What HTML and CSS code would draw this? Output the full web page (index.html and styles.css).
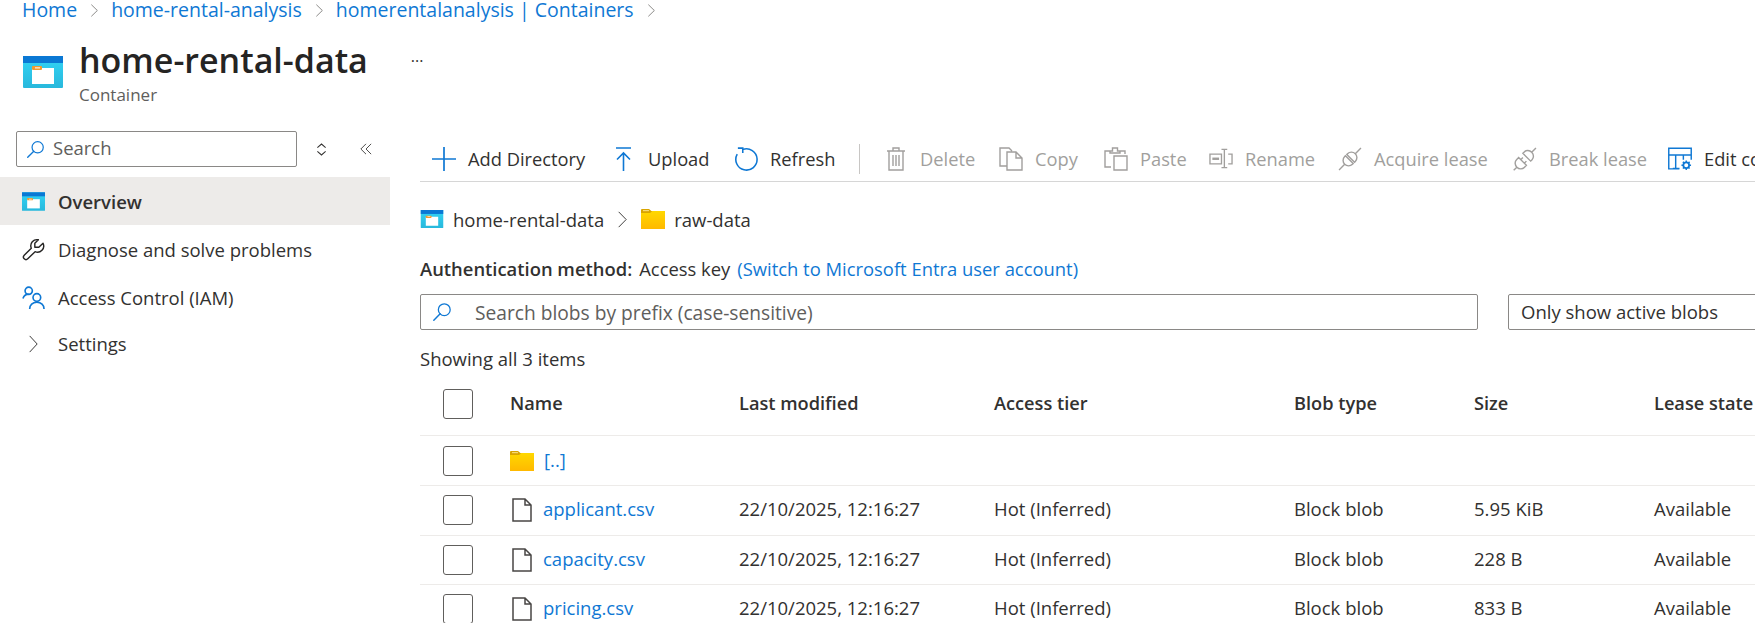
FILE: index.html
```html
<!DOCTYPE html>
<html lang="en">
<head>
<meta charset="utf-8">
<title>home-rental-data</title>
<link rel="stylesheet" href="styles.css">
</head>
<body>
<svg class="sprite" aria-hidden="true">
  <defs>
    <linearGradient id="cb" x1="0" y1="0" x2="0" y2="1"><stop offset="0" stop-color="#32d4f5"/><stop offset="1" stop-color="#28b8dc"/></linearGradient>
    <linearGradient id="fg" x1="0" y1="0" x2="0" y2="1"><stop offset="0" stop-color="#ffd800"/><stop offset="1" stop-color="#ffb900"/></linearGradient>
    <symbol id="container" viewBox="0 0 40 32">
      <rect width="40" height="32" rx="1" fill="url(#cb)"/>
      <rect width="40" height="7" fill="#0a78d4"/>
      <rect x="9" y="12" width="22" height="16" fill="#fff"/>
      <rect x="9" y="10" width="10" height="4" rx="1" fill="#f29a2e"/>
      <rect x="12" y="11.400" width="5" height="1" fill="#fff"/>
    </symbol>
    <symbol id="folder" viewBox="0 0 24 20">
      <path d="M0 2h24v18H0z" fill="url(#fg)"/>
      <path d="M0 1a1 1 0 0 1 1-1h7l3 2.500L9 4H0z" fill="#d9a400"/>
      <rect x="2" y="1" width="6" height="1.200" fill="#f5d774"/>
    </symbol>
    <symbol id="search" viewBox="0 0 22 22">
      <circle cx="13.500" cy="8.500" r="6.500" fill="none" stroke="currentColor" stroke-width="1.400"/>
      <path d="M9 13 2 20" fill="none" stroke="currentColor" stroke-width="1.600" stroke-linecap="round"/>
    </symbol>
    <symbol id="chev" viewBox="0 0 12 20" preserveAspectRatio="none"><path d="M2 1l9 9-9 9" fill="none" stroke="currentColor" stroke-width="1.100"/></symbol>
    <symbol id="file" viewBox="0 0 20 24"><path d="M1 1h12l6 6v16H1zM13 1v6h6" fill="none" stroke="currentColor" stroke-width="1.500"/></symbol>
    <symbol id="plus" viewBox="0 0 24 24"><path d="M12 0v24M0 12h24" stroke="currentColor" stroke-width="1.700"/></symbol>
    <symbol id="upload" viewBox="0 0 24 24"><path d="M4 1h15M11.500 24V6M5 12.500l6.500-6.500 6.500 6.500" fill="none" stroke="currentColor" stroke-width="1.600"/></symbol>
    <symbol id="refresh" viewBox="0 0 25 26"><path d="M3 7.800A11.500 11.500 0 1 0 9 2.700M3.700 1.200H9V6.500" fill="none" stroke="currentColor" stroke-width="1.700"/></symbol>
    <symbol id="trash" viewBox="0 0 20 24"><path d="M1 4h18M7 4V1h6v3M3 4v19h14V4M7 8v11M10 8v11M13 8v11" fill="none" stroke="currentColor" stroke-width="1.400"/></symbol>
    <symbol id="copy" viewBox="0 0 24 24"><path d="M8 19H1V1h9l3 3M8 5h9l6 6v12H8zM17 5v6h6" fill="none" stroke="currentColor" stroke-width="1.400"/></symbol>
    <symbol id="paste" viewBox="0 0 24 24"><path d="M7 20H1V4h5M16 4h5v3M6 6V4h2.500V1h5v3H16v2zM10 9h13v14H10z" fill="none" stroke="currentColor" stroke-width="1.400"/></symbol>
    <symbol id="rename" viewBox="0 0 25 24">
      <path d="M1 7h12v10H1zM16 2v19M13 2h6M13 21h6M20 7h4v10h-4" fill="none" stroke="currentColor" stroke-width="1.400"/>
      <rect x="3.500" y="10.500" width="7" height="2.500" fill="currentColor"/>
    </symbol>
    <symbol id="plug" viewBox="0 0 24 24">
      <g transform="rotate(-45 12 12)" fill="none" stroke="currentColor" stroke-width="1.400">
        <path d="M-3.500 12h8M19.500 12h8M11 6.500H10a5.500 5.500 0 0 0 0 11h1zM13 6.500h1a5.500 5.500 0 0 1 0 11h-1z"/>
      </g>
    </symbol>
    <symbol id="plugb" viewBox="0 0 24 24">
      <g transform="rotate(-45 12 12)" fill="none" stroke="currentColor" stroke-width="1.400">
        <path d="M-4 12h4.500M8.500 6.500H5.500a5 5.500 0 0 0 0 11h3zM8.500 9.500h3M8.500 14.500h3M14.500 6.500h2a5 5.500 0 0 1 0 11h-2zM21.500 12h6"/>
      </g>
    </symbol>
    <symbol id="columns" viewBox="0 0 25 24">
      <path d="M.8.8h23.400v7H.8zM.8 7.800v14.500h11M8 7.800v14M5 21.800h7M16 7.800v5M24.200 7.800v5" fill="none" stroke="currentColor" stroke-width="1.500"/>
      <circle cx="19" cy="18.500" r="3" fill="none" stroke="currentColor" stroke-width="1.800"/>
      <path d="M19 13.500v2M19 21.500v2M14 18.500h2M22 18.500h2M15.500 15l1.500 1.500M21 20.500l1.500 1.500M22.500 15 21 16.500M17 20.500 15.500 22" stroke="currentColor" stroke-width="1.500"/>
    </symbol>
    <symbol id="wrench" viewBox="0 0 26 26"><path d="M10.500 11.500A7 7 0 0 1 18.500 2L14.500 6V10.500H19L23.800 6A7 7 0 0 1 14.800 15.500L6.500 23.500A2.800 2.800 0 0 1 2.500 19.500Z" fill="none" stroke="currentColor" stroke-width="1.600" stroke-linejoin="round"/></symbol>
    <symbol id="iam" viewBox="0 0 24 24"><circle cx="7" cy="5" r="3.800" fill="none" stroke="currentColor" stroke-width="1.700"/><circle cx="15.500" cy="12" r="4" fill="none" stroke="currentColor" stroke-width="1.700"/><path d="M1 13c1-3 3-4.500 6-4.500M8 24c0-4 3-7 7.500-7s7.500 3 7.500 7" fill="none" stroke="currentColor" stroke-width="1.700"/></symbol>
    <symbol id="updown" viewBox="0 0 12 14"><path d="M1.500 5 6 1l4.500 4M1.500 9 6 13l4.500-4" fill="none" stroke="currentColor" stroke-width="1.100"/></symbol>
    <symbol id="dblleft" viewBox="0 0 14 14"><path d="M7 1 1 7l6 6M13 1 7 7l6 6" fill="none" stroke="currentColor" stroke-width="1"/></symbol>
  </defs>
</svg>

<nav class="crumbs">
  <a href="#">Home</a><svg class="ic-chev"><use href="#chev"/></svg>
  <a href="#">home-rental-analysis</a><svg class="ic-chev"><use href="#chev"/></svg>
  <a href="#">homerentalanalysis | Containers</a><svg class="ic-chev"><use href="#chev"/></svg>
</nav>

<header class="head">
  <svg class="ic-head"><use href="#container"/></svg>
  <div class="head-text">
    <h1>home-rental-data</h1>
    <div class="sub">Container</div>
  </div>
  <span class="more">···</span>
</header>

<div class="layout">
  <aside class="side">
    <div class="side-top">
      <div class="side-search"><svg class="ic-search"><use href="#search"/></svg><span>Search</span></div>
      <svg class="ic-updown"><use href="#updown"/></svg>
      <svg class="ic-dbl"><use href="#dblleft"/></svg>
    </div>
    <ul class="menu">
      <li class="menu-item active"><svg class="ic-menu"><use href="#container"/></svg><span>Overview</span></li>
      <li class="menu-item"><svg class="ic-menu dark"><use href="#wrench"/></svg><span>Diagnose and solve problems</span></li>
      <li class="menu-item"><svg class="ic-menu blue"><use href="#iam"/></svg><span>Access Control (IAM)</span></li>
      <li class="menu-item"><svg class="ic-menu-chev"><use href="#chev"/></svg><span>Settings</span></li>
    </ul>
  </aside>

  <main class="main">
    <div class="toolbar">
      <button class="tool w-add"><svg class="ti blue"><use href="#plus"/></svg>Add Directory</button>
      <button class="tool w-up"><svg class="ti blue"><use href="#upload"/></svg>Upload</button>
      <button class="tool w-ref"><svg class="ti blue"><use href="#refresh"/></svg>Refresh</button>
      <span class="sep"></span>
      <button class="tool off w-del"><svg class="ti"><use href="#trash"/></svg>Delete</button>
      <button class="tool off w-copy"><svg class="ti"><use href="#copy"/></svg>Copy</button>
      <button class="tool off w-paste"><svg class="ti"><use href="#paste"/></svg>Paste</button>
      <button class="tool off w-ren"><svg class="ti"><use href="#rename"/></svg>Rename</button>
      <button class="tool off w-acq"><svg class="ti"><use href="#plug"/></svg>Acquire lease</button>
      <button class="tool off w-brk"><svg class="ti"><use href="#plugb"/></svg>Break lease</button>
      <button class="tool"><svg class="ti blue"><use href="#columns"/></svg>Edit columns</button>
    </div>

    <div class="path">
      <svg class="ic-path-c"><use href="#container"/></svg><span>home-rental-data</span>
      <svg class="path-chev"><use href="#chev"/></svg>
      <svg class="ic-path"><use href="#folder"/></svg><span>raw-data</span>
    </div>

    <div class="auth"><b>Authentication method:</b><span>Access key</span><a href="#">(Switch to Microsoft Entra user account)</a></div>

    <div class="filters">
      <div class="blob-search"><svg class="ic-search"><use href="#search"/></svg><span>Search blobs by prefix (case-sensitive)</span></div>
      <div class="blob-select">Only show active blobs</div>
    </div>

    <div class="count">Showing all 3 items</div>

    <div class="row row-head">
      <span class="check"></span><span>Name</span><span>Last modified</span><span>Access tier</span><span>Blob type</span><span>Size</span><span>Lease state</span>
    </div>
    <div class="row row-up">
      <span class="check"></span><span class="name"><svg class="ic-folder"><use href="#folder"/></svg><a href="#">[..]</a></span><span></span><span></span><span></span><span></span><span></span>
    </div>
    <div class="row">
      <span class="check"></span><span class="name"><svg class="ic-file"><use href="#file"/></svg><a href="#">applicant.csv</a></span><span>22/10/2025, 12:16:27</span><span>Hot (Inferred)</span><span>Block blob</span><span>5.95 KiB</span><span>Available</span>
    </div>
    <div class="row">
      <span class="check"></span><span class="name"><svg class="ic-file"><use href="#file"/></svg><a href="#">capacity.csv</a></span><span>22/10/2025, 12:16:27</span><span>Hot (Inferred)</span><span>Block blob</span><span>228 B</span><span>Available</span>
    </div>
    <div class="row">
      <span class="check"></span><span class="name"><svg class="ic-file"><use href="#file"/></svg><a href="#">pricing.csv</a></span><span>22/10/2025, 12:16:27</span><span>Hot (Inferred)</span><span>Block blob</span><span>833 B</span><span>Available</span>
    </div>
  </main>
</div>
</body>
</html>
```
FILE: styles.css
```css
* { box-sizing: border-box; }
html, body { margin: 0; height: 100%; overflow: hidden; }
body { font-family: "Open Sans", "Noto Sans", sans-serif; font-size: 18.500px; color: #323130; background: #fff; width: 1755px; height: 623px; }
a { color: #0f78d4; text-decoration: none; }
.sprite { width: 0; height: 0; display: block; }

.crumbs { display: flex; align-items: center; height: 20px; padding-left: 22px; color: #0f78d4; font-size: 19.500px; line-height: 20px; }
.ic-chev { width: 8px; height: 13px; margin: 0 13px; color: #605e5c; flex: none; }

.head { display: flex; align-items: flex-start; height: 106px; padding: 18px 0 0 23px; }
.ic-head { width: 40px; height: 32px; margin-top: 18px; flex: none; }
.head-text { margin-left: 16px; }
h1 { margin: 0; font-size: 34px; font-weight: 600; line-height: 44px; color: #252423; }
.sub { font-size: 17px; line-height: 24px; color: #605e5c; margin-top: 1px; }
.more { margin: 13px 0 0 43px; font-size: 16px; line-height: 20px; color: #323130; }

.layout { display: flex; }
.side { width: 390px; flex: none; }
.side-top { display: flex; align-items: flex-start; height: 51px; padding: 5px 0 0 16px; }
.side-search { display: flex; align-items: center; width: 281px; height: 36px; border: 1px solid #8a8886; border-radius: 2px; padding-left: 9px; color: #605e5c; }
.side-search span { padding-bottom: 3px; }
.side-search .ic-search { width: 19px; height: 19px; color: #0f78d4; margin-right: 8px; }
.ic-updown { width: 11px; height: 13px; margin: 12px 0 0 19px; color: #323130; }
.ic-dbl { width: 12px; height: 12px; margin: 12px 0 0 33px; color: #323130; }
.menu { list-style: none; margin: 0; padding: 0; }
.menu-item { display: flex; align-items: center; height: 48px; padding: 1px 0 0 22px; color: #323130; }
.menu-item.active { background: #edebe9; font-weight: 600; }
.menu-item:nth-child(4) { height: 44px; }
.ic-menu { width: 23px; height: 23px; margin-right: 13px; flex: none; }
.ic-menu-chev { width: 10px; height: 18px; margin: 0 20px 0 6px; flex: none; color: #323130; }
.dark { color: #252423; }
.blue { color: #0f78d4; }

.main { flex: 1; min-width: 0; padding: 0 0 0 30px; overflow: hidden; }
.toolbar { display: flex; align-items: center; height: 56px; padding: 10px 0 0 12px; border-bottom: 1px solid #d6d6d6; white-space: nowrap; width: 1335px; font-size: 18.300px; }
.tool { display: flex; align-items: center; flex: none; height: 40px; padding: 0; border: 0; background: none; color: #323130; font: inherit; }
.tool.off { color: #a19f9d; }
.ti { width: 24px; height: 24px; margin-right: 12px; flex: none; }
.w-add { width: 180px; }
.w-up { width: 122px; }
.w-ref { width: 125px; }
.w-del { width: 115px; }
.w-copy { width: 105px; }
.w-paste { width: 105px; }
.w-ren { width: 129px; }
.w-acq { width: 175px; }
.w-brk { width: 155px; }
.sep { width: 1px; height: 30px; background: #c8c6c4; margin-right: 24px; flex: none; }

.path { display: flex; align-items: center; height: 61px; padding-top: 13px; }
.ic-path-c { width: 24px; height: 18px; margin-right: 9px; flex: none; }
.ic-path { width: 24px; height: 20px; margin-right: 9px; flex: none; }
.path-chev { width: 10px; height: 17px; margin: 0 14px 0 13px; color: #323130; flex: none; }

.auth { display: flex; align-items: center; height: 36px; margin-top: 7px; font-size: 18.400px; }
.auth b { font-weight: 600; margin-right: 7px; }
.auth a { margin-left: 7px; }

.filters { display: flex; gap: 30px; margin-top: 8px; }
.blob-search { display: flex; align-items: center; flex: none; width: 1058px; height: 36px; border: 1px solid #8a8886; border-radius: 2px; padding-left: 11px; color: #605e5c; font-size: 19.200px; }
.blob-search .ic-search { width: 20px; height: 20px; color: #0f78d4; margin-right: 23px; }
.blob-select { width: 300px; height: 36px; line-height: 34px; border: 1px solid #8a8886; border-radius: 2px; padding-left: 12px; color: #323130; flex: none; }

.count { height: 30px; line-height: 30px; margin-top: 14px; }

.row { display: grid; grid-template-columns: 90px 229px 255px 300px 180px 180px 200px; align-items: center; height: 49.500px; width: 1335px; border-bottom: 1px solid #edebe9; white-space: nowrap; }
.row > span { padding-bottom: 3px; }
.row-head { height: 62px; padding-bottom: 1px; font-weight: 600; font-size: 18.200px; }
.row-head > span { padding-bottom: 3px; }
.row-up { height: 50px; }
.row > .check { width: 30px; height: 30px; margin-left: 23px; padding: 0; border: 1px solid #605e5c; border-radius: 3px; display: block; }
.row > .name { display: flex; align-items: center; padding: 0; }
.name a { padding-bottom: 3px; }
.ic-file { width: 20px; height: 24px; margin: 0 11px 0 2px; color: #484644; flex: none; }
.ic-folder { width: 24px; height: 20px; margin: 0 10px 0 0; flex: none; }
```
